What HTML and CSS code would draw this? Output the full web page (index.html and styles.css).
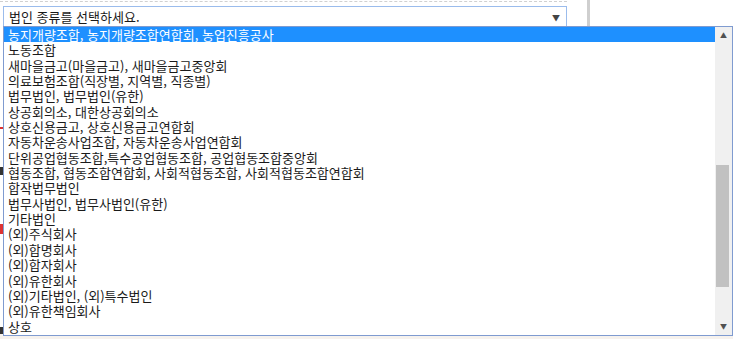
FILE: index.html
```html
<!DOCTYPE html>
<html lang="ko">
<head>
    <meta charset="UTF-8">
    <meta name="viewport" content="width=device-width, initial-scale=1.0">
    <title>법인 종류</title>
    <link rel="stylesheet" href="styles.css">
</head>
<body>
    <div class="page">
        <div class="top-row">
            <div class="form-cell">
                <div class="select-box">
                    <span class="select-text">법인 종류를 선택하세요.</span>
                    <span class="select-arrow">&#9660;</span>
                </div>
            </div>
            <div class="divider"></div>
        </div>
        <div class="bg-content">
            <div class="bg-mark red" style="top: 100px"></div>
            <div class="bg-mark dark" style="top: 140px"></div>
            <div class="bg-mark red tall" style="top: 197px"></div>
            <div class="bg-mark dark" style="top: 300px"></div>
        </div>
        <div class="footer-strip"></div>
    </div>

    <!-- opened option list -->
    <div class="dropdown">
        <ul class="options">
            <li class="selected">농지개량조합, 농지개량조합연합회, 농업진흥공사</li>
            <li>노동조합</li>
            <li>새마을금고(마을금고), 새마을금고중앙회</li>
            <li>의료보험조합(직장별, 지역별, 직종별)</li>
            <li>법무법인, 법무법인(유한)</li>
            <li>상공회의소, 대한상공회의소</li>
            <li>상호신용금고, 상호신용금고연합회</li>
            <li>자동차운송사업조합, 자동차운송사업연합회</li>
            <li>단위공업협동조합,특수공업협동조합, 공업협동조합중앙회</li>
            <li>협동조합, 협동조합연합회, 사회적협동조합, 사회적협동조합연합회</li>
            <li>합작법무법인</li>
            <li>법무사법인, 법무사법인(유한)</li>
            <li>기타법인</li>
            <li>(외)주식회사</li>
            <li>(외)합명회사</li>
            <li>(외)합자회사</li>
            <li>(외)유한회사</li>
            <li>(외)기타법인, (외)특수법인</li>
            <li>(외)유한책임회사</li>
            <li>상호</li>
        </ul>
        <div class="scrollbar">
            <span class="scroll-btn up">&#9650;</span>
            <div class="track">
                <div class="thumb"></div>
            </div>
            <span class="scroll-btn down">&#9660;</span>
        </div>
    </div>
</body>
</html>
```

FILE: styles.css
```css
body {
    margin: 0;
    background-color: #ffffff;
    font-family: "Noto Sans CJK KR", "Noto Sans", sans-serif;
    font-size: 13px;
    color: #1a1a1a;
    overflow: hidden;
}

.page {
    position: relative;
    height: 339px;
}

.top-row {
    display: flex;
    height: 27px;
}

.form-cell {
    width: 567px;
    border-top: 1px dashed #d0d0d0;
    margin-top: 1px;
    padding: 4px 0 0 3px;
    box-sizing: border-box;
}

.select-box {
    display: flex;
    justify-content: space-between;
    align-items: center;
    height: 21px;
    border: 1px solid #9bbcec;
    border-bottom: none;
    box-sizing: border-box;
    padding: 0 6px 0 5px;
    background: #fff;
}

.select-text {
    line-height: 20px;
}

.select-arrow {
    font-size: 8px;
    color: #444;
}

.divider {
    width: 3px;
    margin-left: 20px;
    background-color: #cfcfcf;
}

.bg-content {
    position: relative;
    height: 306px;
}

.bg-mark {
    position: absolute;
    left: 0;
    width: 3px;
    height: 2px;
}

.bg-mark.red { background: #d33; }
.bg-mark.tall { height: 10px; }
.bg-mark.dark { background: #333; height: 8px; }

.footer-strip {
    position: absolute;
    left: 0;
    right: 0;
    bottom: 0;
    height: 5px;
    background-color: #f6f2ee;
}

.dropdown {
    position: absolute;
    left: 3px;
    top: 26px;
    width: 730px;
    height: 310px;
    box-sizing: border-box;
    border: 1px solid #7f9bd0;
    background: #fff;
    display: flex;
}

.options {
    list-style: none;
    margin: 0;
    padding: 0;
    flex: 1;
}

.options li {
    height: 15.35px;
    line-height: 15px;
    padding-left: 4px;
    white-space: nowrap;
}

.options li.selected {
    background-color: #1e90ff;
    color: #fff;
}

.scrollbar {
    width: 17px;
    background-color: #f0f0f0;
    display: flex;
    flex-direction: column;
    align-items: center;
}

.scroll-btn {
    height: 17px;
    line-height: 17px;
    font-size: 7px;
    color: #505050;
}

.track {
    flex: 1;
    width: 100%;
    position: relative;
}

.thumb {
    position: absolute;
    left: 1px;
    right: 3px;
    top: 121px;
    height: 122px;
    background-color: #c1c1c1;
}
```
